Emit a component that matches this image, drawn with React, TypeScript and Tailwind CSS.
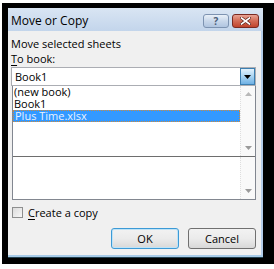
import React from 'react';

function DownArrow({ className = '' }: { className?: string }) {
  return (
    <svg width="7" height="4" viewBox="0 0 7 4" className={className}>
      <path d="M0 0 H7 L3.5 4 Z" fill="currentColor" />
    </svg>
  );
}

function UpArrow({ className = '' }: { className?: string }) {
  return (
    <svg width="7" height="4" viewBox="0 0 7 4" className={className}>
      <path d="M0 4 H7 L3.5 0 Z" fill="currentColor" />
    </svg>
  );
}

export default function App() {
  return (
    <div className="w-[274px] h-[269px] bg-white pt-[3px] pl-[2px] font-['Open_Sans'] text-[11px] text-black leading-none">
      {/* black frame round the dialog */}
      <div className="w-[272px] h-[261px] bg-black pt-[5px] pl-[6px]">
        <div className="w-[255px] h-[250px] flex flex-col bg-[#c4d6ec]">
          {/* Title bar */}
          <div className="h-[23px] flex items-start bg-gradient-to-b from-[#d9e5f3] to-[#c3d5eb]">
            <span className="ml-[3px] mt-[5px] text-[12px] leading-[15px]">Move or Copy</span>
            <div className="ml-auto mt-[6px] flex gap-[3px] mr-[4px]">
              <div className="w-[26px] h-[14px] rounded-[3px] border border-[#7d93b1] bg-gradient-to-b from-[#e9f0f8] via-[#c8d7ea] to-[#b0c5e0] flex items-center justify-center">
                <span className="text-[10px] font-bold text-[#4b5d78] leading-none">?</span>
              </div>
              <div className="w-[27px] h-[14px] rounded-[3px] border border-[#7a2a22] bg-gradient-to-b from-[#e8a394] via-[#d26a55] to-[#c0432c] flex items-center justify-center">
                <svg width="11" height="8" viewBox="0 0 11 8">
                  <path d="M1.5 1 L9.5 7 M9.5 1 L1.5 7" stroke="#5a2018" strokeWidth="3" strokeLinecap="square" />
                  <path d="M1.5 1 L9.5 7 M9.5 1 L1.5 7" stroke="#ffffff" strokeWidth="1.6" strokeLinecap="square" />
                </svg>
              </div>
            </div>
          </div>

          {/* Body */}
          <div className="flex-1 flex">
            <div className="w-[253px] h-[224px] bg-[#f0f0f0] pl-[3px] pr-[5px] pt-[5px] flex flex-col">
              <div className="h-[15px] leading-[15px]">Move selected sheets</div>
              <div className="h-[15px] leading-[15px]">
                <span className="underline underline-offset-2">T</span>o book:
              </div>

              {/* Combo box */}
              <div className="mt-[1px] h-[19px] flex border border-[#abadb3] bg-white">
                <span className="flex-1 pl-[3px] leading-[17px]">Book1</span>
                <div className="w-[15px] border border-[#3c7fb1] bg-gradient-to-b from-[#e3f2fc] via-[#a9d4f2] to-[#6fb1e4] flex items-center justify-center">
                  <DownArrow className="text-black" />
                </div>
              </div>

              {/* List box */}
              <div className="ml-[1px] h-[114px] flex flex-col border border-[#828790] border-t-0 bg-white">
                <div className="h-[71px] flex border-b border-[#6e6e6e]">
                  <div className="flex-1 flex flex-col">
                    <div className="h-[12px] pl-[1px] leading-[12px]">(new book)</div>
                    <div className="h-[12px] pl-[1px] leading-[12px]">Book1</div>
                    <div className="h-[12px] pl-[1px] leading-[10px] bg-[#3399ff] text-[#e8f2ff] border border-dotted border-[#d08a3a]">
                      Plus Time.xlsx
                    </div>
                  </div>
                  <div className="w-[15px] bg-[#f9f9f9] border-l border-dotted border-[#dedede] flex flex-col items-center justify-between py-[6px]">
                    <UpArrow className="text-[#b8b8b8]" />
                    <DownArrow className="text-[#9a9a9a]" />
                  </div>
                </div>
                <div className="flex-1 flex">
                  <div className="flex-1" />
                  <div className="w-[15px] bg-[#f9f9f9] border-l border-dotted border-[#dedede] flex flex-col items-center justify-end pb-[6px]">
                    <DownArrow className="text-[#9a9a9a]" />
                  </div>
                </div>
              </div>

              {/* Checkbox */}
              <div className="mt-[6px] flex items-center gap-[5px] h-[13px]">
                <div className="ml-[1px] w-[11px] h-[11px] border border-[#8e8f8f] bg-gradient-to-br from-[#dcdcdc] to-[#f8f8f8]" />
                <span className="leading-[13px]">
                  <span className="underline underline-offset-2">C</span>reate a copy
                </span>
              </div>

              {/* Buttons */}
              <div className="mt-[9px] flex justify-end gap-[9px]">
                <button className="w-[68px] h-[21px] rounded-[3px] border border-[#3c9ad6] bg-gradient-to-b from-[#f2f2f2] via-[#ebebeb] to-[#d8d8d8] shadow-[inset_0_0_0_1px_#bfe3f7] text-[11px] leading-none">
                  OK
                </button>
                <button className="w-[68px] h-[21px] rounded-[3px] border border-[#707070] bg-gradient-to-b from-[#f2f2f2] via-[#ebebeb] to-[#d8d8d8] text-[11px] leading-none">
                  Cancel
                </button>
              </div>
            </div>
            <div className="w-[2px] h-[224px] bg-[#b5cde9]" />
          </div>
          <div className="h-[2px] bg-[#a8cbe8]" />
          <div className="h-[1px] bg-[#24414f]" />
        </div>
      </div>
    </div>
  );
}
